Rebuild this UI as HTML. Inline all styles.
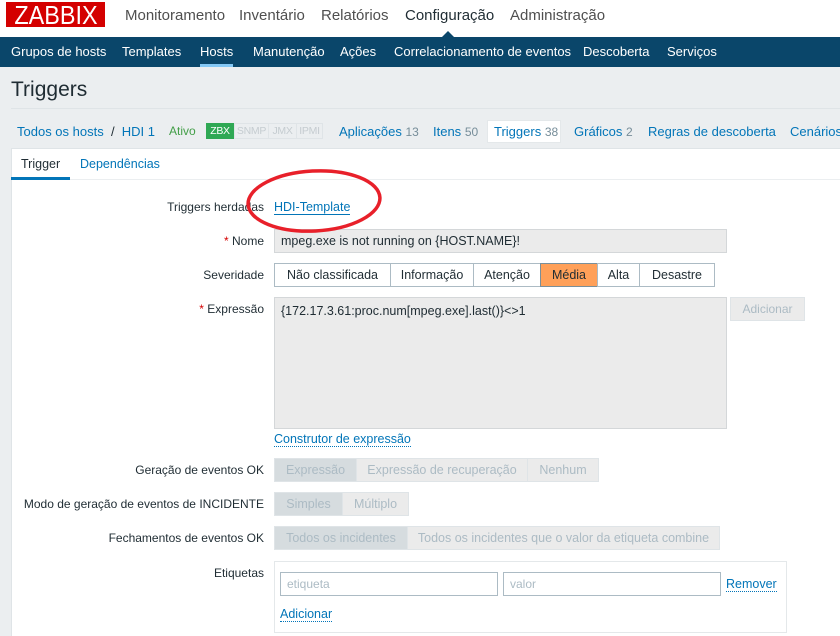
<!DOCTYPE html>
<html><head><meta charset="utf-8"><style>
*{box-sizing:border-box;margin:0;padding:0}
body{width:840px;height:636px;overflow:hidden;background:#ebeef0;font-family:"Liberation Sans",sans-serif;font-size:12px;color:#1f2c33;position:relative}
.a{position:absolute;white-space:nowrap}
a,.lk{color:#0275b8;text-decoration:none}
.top{position:absolute;left:0;top:0;width:840px;height:37px;background:#fff}
.nav{position:absolute;left:0;top:37px;width:840px;height:30px;background:#0a466a}
.nav span{position:absolute;top:7px;color:#fff;font-size:13px}
.panel{position:absolute;left:11px;top:148px;width:829px;height:488px;background:#fff;border:1px solid #dfe4e7;border-right:none;border-bottom:none}
.lbl{position:absolute;right:576px;text-align:right;white-space:nowrap;font-size:12px}
.inp{position:absolute;background:#ebebeb;border:1px solid #d4d7d9}
.seg{position:absolute;display:flex;height:24px}
.seg div{border:1px solid #acbbc4;margin-left:-1px;line-height:22px;background:#fff;text-align:center;font-size:12.5px}
.dis div{border-color:#dfe4e7;background:#ebebeb;color:#acbbc4}
.dis div.on{background:#d6dcdf}
.dot{border-bottom:1px dotted #0275b8}
.bd{height:16px;line-height:14px;font-size:10.5px;text-align:center;border:1px solid #dfe4e7;color:#c5ccd0;letter-spacing:-0.3px}
</style></head><body>
<div class="top"></div>
<div class="a" style="left:6px;top:2px;width:99px;height:25px;background:#d40000;overflow:hidden"><div style="color:#fff;font-size:26px;line-height:26px;text-align:center;width:110px;margin-left:-5px;transform:scaleX(0.9)">ZABBIX</div></div>
<div class="a" style="left:125px;top:7px;font-size:15px;color:#4f4f4f">Monitoramento</div>
<div class="a" style="left:239px;top:7px;font-size:15px;color:#4f4f4f">Inventário</div>
<div class="a" style="left:321px;top:7px;font-size:15px;color:#4f4f4f">Relatórios</div>
<div class="a" style="left:405px;top:7px;font-size:15px;color:#1f2c33">Configuração</div>
<div class="a" style="left:510px;top:7px;font-size:15px;color:#4f4f4f">Administração</div>
<div class="nav">
<span style="left:11px">Grupos de hosts</span>
<span style="left:122px">Templates</span>
<span style="left:200px">Hosts</span>
<span style="left:253px">Manutenção</span>
<span style="left:340px">Ações</span>
<span style="left:394px">Correlacionamento de eventos</span>
<span style="left:583px">Descoberta</span>
<span style="left:667px">Serviços</span>
<div style="position:absolute;left:200px;top:27px;width:33px;height:3px;background:#84c8f5"></div>
<div style="position:absolute;left:442px;top:-6px;width:0;height:0;border-left:6px solid transparent;border-right:6px solid transparent;border-bottom:6px solid #0a466a"></div>
</div>
<div class="a" style="left:11px;top:78px;font-size:21px">Triggers</div>
<div class="a" style="left:11px;top:108px;width:829px;height:1px;background:#dfe4e7"></div>
<div class="a" style="left:17px;top:124px;font-size:13px"><span class="lk">Todos os hosts</span>&nbsp; / &nbsp;<span class="lk">HDI 1</span></div>
<div class="a" style="left:169px;top:124px;font-size:12px;color:#429e47">Ativo</div>
<div class="a bd" style="left:206px;top:123px;width:28px;background:#2fa854;color:#fff;border-color:#2fa854">ZBX</div>
<div class="a bd" style="left:234px;top:123px;width:35px">SNMP</div>
<div class="a bd" style="left:268px;top:123px;width:29px">JMX</div>
<div class="a bd" style="left:296px;top:123px;width:27px">IPMI</div>
<div class="a" style="left:339px;top:124px;font-size:13px"><span class="lk">Aplicações</span> <span style="color:#768d99;font-size:12px">13</span></div>
<div class="a" style="left:433px;top:124px;font-size:13px"><span class="lk">Itens</span> <span style="color:#768d99;font-size:12px">50</span></div>
<div class="a" style="left:487px;top:120px;width:74px;height:23px;background:#fff;border:1px solid #e4e8ea"></div>
<div class="a" style="left:494px;top:124px;font-size:13px"><span class="lk">Triggers</span> <span style="color:#768d99;font-size:12px">38</span></div>
<div class="a" style="left:574px;top:124px;font-size:13px"><span class="lk">Gráficos</span> <span style="color:#768d99;font-size:12px">2</span></div>
<div class="a" style="left:648px;top:124px;font-size:13px" ><span class="lk">Regras de descoberta</span></div>
<div class="a" style="left:790px;top:124px;font-size:13px"><span class="lk">Cenários</span></div>
<div class="panel"></div>
<div class="a" style="left:21px;top:157px;font-size:12.5px">Trigger</div>
<div class="a" style="left:80px;top:157px;font-size:12.5px" ><span class="lk">Dependências</span></div>
<div class="a" style="left:11px;top:177px;width:59px;height:3px;background:#0275b8"></div>
<div class="a" style="left:70px;top:179px;width:770px;height:1px;background:#ebeef0"></div>

<div class="lbl" style="top:200px">Triggers herdadas</div>
<div class="a" style="left:274px;top:200px;font-size:12.5px"><span class="lk" style="border-bottom:1px solid #0275b8">HDI-Template</span></div>
<div class="lbl" style="top:234px"><span style="color:#d40000">*</span> Nome</div>
<div class="inp" style="left:274px;top:229px;width:453px;height:24px;padding:4px 6px;font-size:12.5px">mpeg.exe is not running on {HOST.NAME}!</div>
<div class="lbl" style="top:268px">Severidade</div>
<div class="seg" style="left:275px;top:263px">
<div style="width:117px">Não classificada</div><div style="width:84px">Informação</div><div style="width:68px">Atenção</div><div style="width:58px;background:#ffa059;border-color:#7a8f9a">Média</div><div style="width:43px">Alta</div><div style="width:76px">Desastre</div></div>
<div class="lbl" style="top:302px"><span style="color:#d40000">*</span> Expressão</div>
<div class="inp" style="left:274px;top:297px;width:453px;height:132px;padding:6px 6px;font-size:12.5px">{172.17.3.61:proc.num[mpeg.exe].last()}&lt;&gt;1</div>
<div class="a" style="left:730px;top:297px;width:75px;height:24px;border:1px solid #dfe4e7;background:#ebebeb;color:#acbbc4;text-align:center;line-height:22px">Adicionar</div>
<div class="a" style="left:274px;top:432px;font-size:12.5px"><span class="lk dot">Construtor de expressão</span></div>
<div class="lbl" style="top:463px">Geração de eventos OK</div>
<div class="seg dis" style="left:275px;top:458px"><div class="on" style="width:83px">Expressão</div><div style="width:172px">Expressão de recuperação</div><div style="width:72px">Nenhum</div></div>
<div class="lbl" style="top:497px">Modo de geração de eventos de INCIDENTE</div>
<div class="seg dis" style="left:275px;top:492px"><div class="on" style="width:69px">Simples</div><div style="width:67px">Múltiplo</div></div>
<div class="lbl" style="top:531px">Fechamentos de eventos OK</div>
<div class="seg dis" style="left:275px;top:526px"><div class="on" style="width:134px">Todos os incidentes</div><div style="width:313px">Todos os incidentes que o valor da etiqueta combine</div></div>
<div class="lbl" style="top:566px">Etiquetas</div>
<div class="a" style="left:274px;top:561px;width:513px;height:72px;border:1px solid #e4e8ea"></div>
<div class="a" style="left:280px;top:572px;width:218px;height:24px;border:1px solid #acbbc4;padding:4px 6px;color:#acbbc4">etiqueta</div>
<div class="a" style="left:503px;top:572px;width:218px;height:24px;border:1px solid #acbbc4;padding:4px 6px;color:#acbbc4">valor</div>
<div class="a" style="left:726px;top:577px;font-size:12.5px"><span class="lk dot">Remover</span></div>
<div class="a" style="left:280px;top:607px;font-size:12.5px"><span class="lk dot">Adicionar</span></div>
<svg class="a" style="left:0;top:0" width="840" height="636"><ellipse cx="314" cy="201" rx="66" ry="30" transform="rotate(-3 314 201)" fill="none" stroke="#e8202a" stroke-width="3.5"/></svg>
</body></html>
